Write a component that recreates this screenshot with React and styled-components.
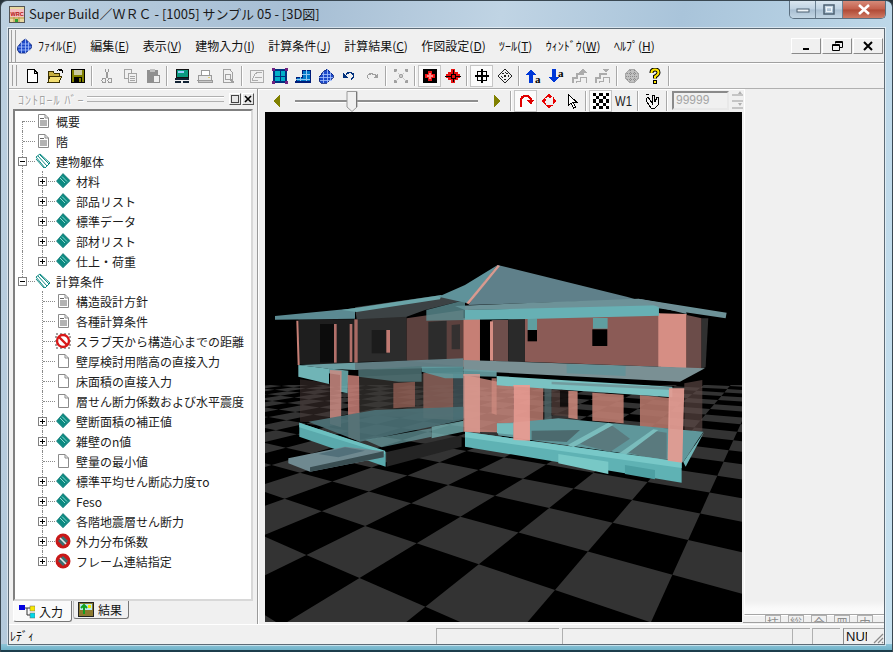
import styled, { createGlobalStyle } from 'styled-components';

const GlobalStyle = createGlobalStyle`
  html, body {
    margin: 0;
    padding: 0;
    background: #26323a;
  }
  * {
    box-sizing: border-box;
  }
`;

const uiFont = `"Noto Sans CJK JP", "Liberation Sans", sans-serif`;

const Window = styled.div`
  width: 893px;
  height: 652px;
  display: flex;
  flex-direction: column;
  overflow: hidden;
  border-radius: 7px 7px 0 0;
  border: 1px solid #3a4852;
  border-bottom: none;
  font-family: ${uiFont};
  font-size: 12px;
  color: #111;
  background:
    linear-gradient(to top, #1c3e4c 0, #1c3e4c 2px, #6fb2c8 2px, #8ec4d8 8px, transparent 8px),
    linear-gradient(100deg, #bcd0e0 0%, #a6bed4 30%, #c0d4e4 50%, #a9c4da 68%, #c8e2f0 100%);
`;

const TitleBar = styled.div`
  height: 27px;
  flex: none;
  display: flex;
  align-items: flex-start;
  padding-left: 8px;
`;

const AppIcon = styled.svg`
  width: 16px;
  height: 17px;
  margin-top: 5px;
  flex: none;
`;

const TitleText = styled.div`
  margin: 4px 0 0 4px;
  font-size: 13px;
  line-height: 18px;
  color: #1a1a1a;
  white-space: nowrap;
`;

const CaptionButtons = styled.div`
  margin-left: auto;
  margin-right: 6px;
  margin-top: -1px;
  flex: none;
  display: flex;
  height: 19px;
  border: 1px solid #5b6f80;
  border-top: none;
  border-radius: 0 0 5px 5px;
  overflow: hidden;
`;

const CaptionButton = styled.div`
  width: ${(p) => p.$w}px;
  flex: none;
  display: flex;
  align-items: center;
  justify-content: center;
  border-right: 1px solid #6d8294;
  background: ${(p) =>
    p.$close
      ? 'linear-gradient(#d8907f, #c4604c 50%, #b04a36 55%, #cf7a64)'
      : 'linear-gradient(#dce8f1, #bfd2e2 50%, #a9bfd2 55%, #c3d6e4)'};

  &:last-child {
    border-right: none;
  }
`;

const Client = styled.div`
  flex: 1;
  margin: 0 7px 7px 7px;
  display: flex;
  flex-direction: column;
  min-height: 0;
  background: #f0f0f0;
  border: 1px solid #5d6b76;
  box-shadow: 0 0 0 1px rgba(255, 255, 255, 0.5);
`;

const MenuRow = styled.div`
  height: 34px;
  flex: none;
  display: flex;
  align-items: center;
  padding-left: 2px;
  border-bottom: 1px solid #a0a0a0;
  box-shadow: 0 1px 0 #fff;
`;

const Gripper = styled.div`
  width: 5px;
  height: ${(p) => p.$h}px;
  flex: none;
  border-left: 1px solid #a0a0a0;
  border-right: 1px solid #a0a0a0;
`;

const MenuLogo = styled.svg`
  width: 17px;
  height: 16px;
  margin: 0 5px 0 0;
  flex: none;
`;

const MenuItem = styled.span`
  margin-right: 13.4px;
  white-space: nowrap;
  line-height: 16px;
`;

const MdiButtons = styled.div`
  margin-left: auto;
  margin-right: 1px;
  display: flex;
  gap: 1px;
`;

const MdiButton = styled.div`
  width: 30px;
  height: 16px;
  display: flex;
  align-items: center;
  justify-content: center;
  background: #f0f0f0;
  border: 1px solid;
  border-color: #fff #8a8a8a #8a8a8a #fff;
`;

const ToolRow = styled.div`
  height: 25px;
  flex: none;
  display: flex;
  align-items: center;
  padding-left: 3px;
`;

const ToolBlock = styled.div`
  display: flex;
  align-items: center;
  padding-left: 3px;
  height: 23px;
`;

const ToolButton = styled.div`
  width: 23px;
  height: 22px;
  flex: none;
  display: flex;
  align-items: center;
  justify-content: center;
  background: ${(p) => (p.$active ? '#fbfbfb' : 'transparent')};
  border: 1px solid ${(p) => (p.$active ? '#c6c6c6' : 'transparent')};
`;

const LayerLabel = styled.span`
  font-family: 'Liberation Sans', sans-serif;
  font-size: 14px;
  color: #222;
  transform: scaleX(0.8);
`;

const ToolSep = styled.div`
  width: 6px;
  height: 20px;
  flex: none;

  &::before {
    content: '';
    display: block;
    width: 1px;
    height: 100%;
    margin-left: 2px;
    background: #a8a8a8;
    box-shadow: 1px 0 0 #fff;
  }
`;

const Main = styled.div`
  flex: 1;
  display: flex;
  min-height: 0;
  border-top: 1px solid #b0b0b0;
  box-shadow: inset 0 1px 0 #fff;
`;

const ControlBar = styled.div`
  width: 249px;
  flex: none;
  display: flex;
  flex-direction: column;
  border-right: 1px solid #9a9a9a;
  box-shadow: 1px 0 0 #fff;
`;

const BarHeader = styled.div`
  height: 20px;
  flex: none;
  display: flex;
  align-items: center;
  padding: 0 3px 0 9px;
  color: #a3a3a3;
  text-shadow: 1px 1px 0 #fff;
`;

const BarTitle = styled.span`
  letter-spacing: 1.1px;
  white-space: nowrap;
`;

const BarLines = styled.div`
  flex: 1;
  height: 6px;
  margin: 0 4px 0 2px;
  border-top: 1px solid #b0b0b0;
  border-bottom: 1px solid #b0b0b0;
  box-shadow: inset 0 1px 0 #fff;
`;

const BarButton = styled.div`
  width: 12px;
  height: 12px;
  margin-left: 1px;
  display: flex;
  align-items: center;
  justify-content: center;
  border: 1px solid;
  border-color: #fff #555 #555 #fff;
  background: #e6e6e6;
`;

const TreeBox = styled.div`
  width: 240px;
  height: 492px;
  flex: none;
  margin-left: 4px;
  background: #fff;
  border: 2px solid;
  border-color: #808080 #d8d8d8 #d8d8d8 #808080;
`;

const TreeRow = styled.div`
  height: 20px;
  display: flex;
  align-items: center;
  white-space: nowrap;
  font-size: 12px;
  color: #1c1c1c;
`;

const Guide = styled.div`
  width: 20px;
  height: 20px;
  flex: none;
  position: relative;

  &::before {
    content: ${(p) => (p.$line === 'none' ? 'none' : "''")};
    position: absolute;
    left: 7px;
    top: ${(p) => (p.$line === 'down' ? '10px' : '0')};
    bottom: ${(p) => (p.$line === 'up' ? '10px' : '0')};
    border-left: 1px dotted #8a8a8a;
  }

  &::after {
    content: ${(p) => (p.$branch ? "''" : 'none')};
    position: absolute;
    left: 8px;
    right: 0;
    top: 10px;
    border-top: 1px dotted #8a8a8a;
  }
`;

const Expander = styled.div`
  position: absolute;
  left: 3px;
  top: 6px;
  width: 9px;
  height: 9px;
  z-index: 1;
  background: #fff;
  border: 1px solid #808080;

  &::before {
    content: '';
    position: absolute;
    left: 1px;
    right: 1px;
    top: 3px;
    height: 1px;
    background: #000;
  }

  &::after {
    content: ${(p) => (p.$open ? 'none' : "''")};
    position: absolute;
    top: 1px;
    bottom: 1px;
    left: 3px;
    width: 1px;
    background: #000;
  }
`;

const TreeIcon = styled.svg`
  width: 16px;
  height: 16px;
  flex: none;
  margin-right: 5px;
`;

const Tabs = styled.div`
  height: 21px;
  flex: none;
  display: flex;
  align-items: flex-start;
  padding-left: 4px;
`;

const Tab = styled.div`
  display: flex;
  align-items: center;
  gap: 4px;
  flex: none;
  width: ${(p) => p.$w}px;
  height: ${(p) => (p.$active ? 21 : 18)}px;
  padding-left: ${(p) => (p.$active ? 5 : 4)}px;
  margin-left: ${(p) => (p.$active ? 0 : 1)}px;
  font-size: 12px;
  background: ${(p) => (p.$active ? '#fafafa' : '#f0f0f0')};
  border-right: 1px solid #777;
  border-bottom: 1px solid #777;
  border-left: 1px solid ${(p) => (p.$active ? '#fff' : '#bbb')};
  border-radius: 0 0 3px 3px;
`;

const TabIcon = styled.svg`
  width: 16px;
  height: 15px;
  flex: none;
`;

const Splitter = styled.div`
  width: 7px;
  flex: none;
`;

const ViewColumn = styled.div`
  width: 478px;
  flex: none;
  display: flex;
  flex-direction: column;
`;

const ViewToolbar = styled.div`
  height: 23px;
  flex: none;
  display: flex;
  align-items: center;
  overflow: hidden;
`;

const Slider = styled.div`
  width: 197px;
  height: 20px;
  flex: none;
  position: relative;

  &::before {
    content: '';
    position: absolute;
    left: 7px;
    right: 7px;
    top: 9px;
    height: 2px;
    background: #8e8e8e;
    box-shadow: 0 1px 0 #fff;
  }
`;

const SliderThumb = styled.svg`
  position: absolute;
  left: 58px;
  top: 0;
  width: 12px;
  height: 21px;
`;

const ValueField = styled.div`
  width: 57px;
  height: 19px;
  flex: none;
  margin-left: 2px;
  padding-left: 2px;
  font-family: 'Liberation Sans', sans-serif;
  font-size: 12px;
  line-height: 15px;
  color: #a4a4a4;
  border: 2px solid;
  border-color: #8a8a8a #e8e8e8 #e8e8e8 #8a8a8a;
`;

const Spinner = styled.svg`
  width: 12px;
  height: 22px;
  margin-left: 3px;
  flex: none;
`;

const Canvas = styled.svg`
  display: block;
  width: 477px;
  height: 510px;
  flex: none;
  background: #000;
`;

const SidePanel = styled.div`
  flex: 1;
  display: flex;
  flex-direction: column;
  min-width: 0;
`;

const SideBlank = styled.div`
  flex: 1;
  margin-left: 1px;
  border-left: 1px solid #fff;
  background: linear-gradient(#f0f0f0 97.5%, #fafafa 99%);
  border-bottom: 1px solid #a6a6a6;
  box-shadow: 0 1px 0 #fff;
`;

const SideButtons = styled.div`
  height: 8px;
  flex: none;
  display: flex;
  justify-content: flex-end;
  gap: 7px;
  padding-right: 11px;
  margin-bottom: 1px;
  overflow: hidden;
  border-bottom: 1px solid #a0a0a0;
`;

const SideButton = styled.div`
  width: 16px;
  height: 18px;
  flex: none;
  overflow: hidden;
  border: 1px solid #b0b0b0;
  border-bottom: none;
  font-size: 12px;
  line-height: 14px;
  text-align: center;
  color: #8d8d8d;
  background: #f0f0f0;
`;

const StatusBar = styled.div`
  height: 20px;
  flex: none;
  display: flex;
  align-items: flex-end;
  position: relative;
  border-top: 1px solid #fff;
`;

const StatusText = styled.div`
  width: 427px;
  height: 17px;
  padding-left: 1px;
  line-height: 17px;
  flex: none;
`;

const StatusPanel = styled.div`
  width: ${(p) => p.$w}px;
  margin-left: ${(p) => p.$gap || 0}px;
  height: 16px;
  flex: none;
  overflow: hidden;
  border-left: 1px solid ${(p) => (p.$dark ? '#8a8a8a' : '#b0b0b0')};
  border-top: 1px solid #a8a8a8;
  font-family: 'Liberation Sans', sans-serif;
  font-size: 13px;
  line-height: 15px;
  padding-left: ${(p) => (p.$dark ? 2 : 0)}px;
  color: #111;
`;

const NumLabel = styled.div`
  width: 21px;
  overflow: hidden;
  white-space: nowrap;
`;

const SizeGrip = styled.svg`
  position: absolute;
  right: 0;
  bottom: 0;
  width: 12px;
  height: 12px;
`;

const Svg16 = ({ children }) => (
  <svg width="16" height="16" viewBox="0 0 16 16" shapeRendering="crispEdges">
    {children}
  </svg>
);

const BuildingShape = () => (
  <>
    <path d="M1 9 L6 3 L9 1 L15 7 L15 10 L9 15 L3 15 L1 12Z" fill="#1c48c8" stroke="#0a2278" strokeWidth="0.8" />
    <path d="M5 4 L5 15 M9 1 L9 15 M12 4 L12 13 M1 9 L15 9 M2 12 L14 12 M4 6 L13 6" stroke="#a9c4ff" strokeWidth="0.8" fill="none" />
  </>
);

const icons = {
  newDoc: <path d="M3.5 1.5H10L13.5 5V14.5H3.5Z M10 1.5V5H13.5" fill="#fff" stroke="#000" />,
  open: (
    <>
      <path d="M1 3H6L7 5H12V14H1Z" fill="#c8b040" stroke="#3a3000" />
      <path d="M3 8H15L12 14H1Z" fill="#f2dd70" stroke="#3a3000" />
      <path d="M10 3 Q12 0 15 2 M15 2V5M15 2H12" fill="none" stroke="#000" strokeWidth="1" />
    </>
  ),
  save: (
    <>
      <rect x="1.5" y="1.5" width="13" height="13" fill="#808000" stroke="#000" />
      <rect x="4" y="2" width="8" height="5" fill="#c8c8a0" />
      <rect x="4" y="9" width="8" height="6" fill="#000" />
      <rect x="9" y="10" width="2" height="4" fill="#808000" />
    </>
  ),
  cut: (
    <g stroke="#9a9a9a" fill="none">
      <path d="M6 1L9 10M10 1L7 10" />
      <circle cx="5" cy="12.5" r="2" />
      <circle cx="11" cy="12.5" r="2" />
    </g>
  ),
  copy: (
    <g stroke="#a4a4a4" fill="#f0f0f0">
      <rect x="2.5" y="1.5" width="7" height="9" />
      <rect x="6.5" y="5.5" width="8" height="9" />
      <path d="M8 8H13M8 10H13M8 12H13" fill="none" />
    </g>
  ),
  paste: (
    <>
      <rect x="2" y="2" width="11" height="13" rx="1" fill="#909090" />
      <rect x="5" y="1" width="5" height="3" fill="#c0c0c0" />
      <rect x="8.5" y="7.5" width="6" height="7" fill="#f0f0f0" stroke="#909090" />
    </>
  ),
  panel: (
    <>
      <rect x="2" y="1" width="12" height="8" fill="#0a9a80" stroke="#111" />
      <rect x="4" y="3" width="6" height="2" fill="#9cf" />
      <path d="M1 11H15M1 14H7M9 14H15" stroke="#123" strokeWidth="1.4" />
    </>
  ),
  printer: (
    <g stroke="#9a9a9a" fill="#e8e8e8">
      <path d="M4 2H12V7H4Z" fill="#fff" />
      <path d="M2 7H14L15 12H1Z" />
      <path d="M1 12H15V14H1Z" fill="#c8c8c8" />
      <rect x="11" y="9" width="2" height="1" fill="#e0d070" stroke="none" />
    </g>
  ),
  preview: (
    <g stroke="#a0a0a0" fill="none">
      <path d="M3 1.5H10L12 4V14H3Z" />
      <circle cx="8" cy="9" r="3" />
      <path d="M10 11L14 15" strokeWidth="1.5" />
    </g>
  ),
  graph: (
    <g stroke="#acacac" fill="none">
      <rect x="1.5" y="2.5" width="13" height="12" />
      <path d="M3 12L6 6Q9 3 13 5M6 9H13M3 12H9" />
    </g>
  ),
  frame: (
    <>
      <rect x="2" y="2" width="12" height="12" fill="#00b0c8" stroke="#003080" strokeWidth="1.4" />
      <path d="M8 2V14M2 8H14" stroke="#003080" />
      <path d="M0 0h3v3H0z M13 0h3v3h-3z M0 13h3v3H0z M13 13h3v3h-3z" fill="#702080" />
    </>
  ),
  stairs: (
    <>
      <path d="M1 9H7V2H15V14H1Z" fill="#0078c8" stroke="#001c78" />
      <path d="M1 11H15M7 6H15M11 2V14M5 9V14" stroke="#90c8f0" />
      <path d="M0 14H16" stroke="#001c78" strokeWidth="2" />
    </>
  ),
  building: <BuildingShape />,
  undo: (
    <>
      <path d="M5 6Q9 3 12 6Q14 9 10 11" fill="none" stroke="#00307c" strokeWidth="1.5" />
      <path d="M2 4V10H7Z" fill="#00307c" />
    </>
  ),
  redo: (
    <>
      <path d="M13 8Q8 4 4 7Q2 9 5 11" fill="none" stroke="#a0a0a0" strokeWidth="1.2" />
      <path d="M14 5V10H10Z" fill="#a0a0a0" />
    </>
  ),
  nodes: (
    <g fill="#a0a0a0">
      <path d="M1 1h3v3H1z M12 1h3v3h-3z M1 12h3v3H1z M12 12h3v3h-3z M6 6h4v4H6z" />
      <path d="M3 3L13 13M13 3L3 13" stroke="#c8c8c8" strokeDasharray="2 1" />
    </g>
  ),
  redBox: (
    <>
      <rect x="1" y="1" width="14" height="14" fill="#000" />
      <path d="M6 3H10V6H13V10H10V13H6V10H3V6H6Z" fill="#f01818" />
      <path d="M7 5H9V11H7Z M5 7H11V9H5Z" fill="#fff" opacity=".5" />
    </>
  ),
  redDiamond: (
    <>
      <path d="M6 1H10V4H13V6H15V10H13V12H10V15H6V12H3V10H1V6H3V4H6Z" fill="#e81010" />
      <path d="M0 8H16M8 2V14" stroke="#000" />
      <rect x="6" y="6" width="4" height="4" fill="#e81010" stroke="#000" />
    </>
  ),
  cross: (
    <>
      <rect x="3.5" y="3.5" width="9" height="9" fill="none" stroke="#000" strokeWidth="1.5" />
      <path d="M1 8H15M8 1V15" stroke="#000" strokeWidth="1.5" />
    </>
  ),
  diamond: (
    <g fill="none" stroke="#222">
      <path d="M8 1L15 8L8 15L1 8Z" />
      <path d="M8 4L12 8L8 12L4 8Z" strokeDasharray="1 1" />
      <path d="M4 4L12 12 M12 4L4 12" strokeDasharray="1 1" />
    </g>
  ),
  arrowUpA: (
    <>
      <path d="M5 1L10 7H7V15H3V7H0Z" fill="#0038d8" />
      <text x="9" y="15" fontFamily="Liberation Serif, serif" fontWeight="700" fontSize="11" fill="#000">a</text>
    </>
  ),
  arrowDownA: (
    <>
      <path d="M3 1H7V9H10L5 15L0 9H3Z" fill="#0038d8" />
      <text x="9" y="9" fontFamily="Liberation Serif, serif" fontWeight="700" fontSize="11" fill="#000">a</text>
    </>
  ),
  stairUp: (
    <g fill="none" stroke="#ababab">
      <path d="M1 15V10H5V6H12" strokeWidth="1.2" />
      <path d="M4 15V13H8V9H14V15" />
      <path d="M11 1L14 4H8Z" fill="#ababab" />
    </g>
  ),
  stairDown: (
    <g fill="none" stroke="#ababab">
      <path d="M1 15V10H5V6H12" strokeWidth="1.2" />
      <path d="M4 15V13H8V9H14V15" />
      <path d="M8 1H14L11 4Z" fill="#ababab" />
    </g>
  ),
  ball: (
    <>
      <circle cx="8" cy="8" r="6.5" fill="#c0c0c0" stroke="#a8a8a8" />
      <path d="M3 5H13M2 8H14M3 11H13M6 2V14M10 2V14" stroke="#8c8c8c" strokeDasharray="1 1" />
    </>
  ),
  help: (
    <g shapeRendering="auto" fill="none">
      <path d="M4.5 5Q4.5 1.5 8 1.5Q11.5 1.5 11.5 4.5Q11.5 6.5 8 8.5V10.5" stroke="#000" strokeWidth="4" />
      <path d="M4.5 5Q4.5 1.5 8 1.5Q11.5 1.5 11.5 4.5Q11.5 6.5 8 8.5V10.5" stroke="#ffe600" strokeWidth="2" />
      <rect x="6.5" y="12.5" width="3" height="3" fill="#ffe600" stroke="#000" />
    </g>
  ),
  triLeft: <path d="M11 2V14L4 8Z" fill="#808000" />,
  triRight: <path d="M5 2V14L12 8Z" fill="#808000" />,
  rotate: (
    <>
      <path d="M3 14V8Q3 3 8 3Q12 3 13 7" fill="none" stroke="#e00000" strokeWidth="2.4" />
      <path d="M9 7H16L13 12Z" fill="#e00000" />
    </>
  ),
  move: (
    <g fill="#e80000">
      <path d="M8 0L11 4H5Z M8 16L5 12H11Z M0 8L4 5V11Z M16 8L12 11V5Z" />
      <rect x="4" y="4" width="8" height="8" fill="none" stroke="#e80000" strokeDasharray="2 2" />
    </g>
  ),
  pointer: <path d="M4 1V13L7 10L9.5 15L11.5 14L9 9.5H13Z" fill="#fff" stroke="#000" />,
  checker: (
    <>
      <rect width="16" height="16" fill="#fff" />
      <path d="M0 0h3v3H0z M6 0h4v3H6z M13 0h3v3h-3z M3 3h3v3H3z M10 3h3v3h-3z M0 6h3v4H0z M6 6h4v4H6z M13 6h3v4h-3z M3 10h3v3H3z M10 10h3v3h-3z M0 13h3v3H0z M6 13h4v3H6z M13 13h3v3h-3z" fill="#000" />
    </>
  ),
  hand: (
    <g fill="#f4f4f4" stroke="#000">
      <path d="M3 4L7 10V2L9 2L10 9L12 4L14 5L13 12L10 15H6L2 9L1 6Z" />
      <path d="M1 2L4 1" fill="none" />
    </g>
  ),
};

const toolbarOne = [
  'newDoc', 'open', 'save', '|',
  'cut', 'copy', 'paste', '|',
  'panel', 'printer', 'preview', '|',
  'graph', 'frame', 'stairs', 'building', 'undo', 'redo', '|',
  'nodes', '|',
  'redBox*', 'redDiamond', '|',
  'cross*', 'diamond', '|',
  'arrowUpA', 'arrowDownA', 'stairUp', 'stairDown', '|',
  'ball', 'help', '|',
];

const ToolIcons = ({ list }) =>
  list.map((name, i) => {
    if (name === '|') return <ToolSep key={i} />;
    const active = name.endsWith('*');
    const key = name.replace('*', '');
    return (
      <ToolButton key={i} $active={active}>
        <Svg16>{icons[key]}</Svg16>
      </ToolButton>
    );
  });

const TreeGlyph = ({ type }) => {
  const doc = (
    <path d="M3.5 1.5H10L13.5 5V14.5H3.5Z M10 1.5V5H13.5" fill="#fff" stroke="#8a8a8a" />
  );
  const book = (
    <>
      <path d="M8 0.5L15 7.5L8 14.5L1.5 8Z" fill="#0d8b82" stroke="#066" strokeWidth="0.6" />
      <path d="M1.5 8.5L8 15L15 8" fill="none" stroke="#5aa" strokeWidth="1" />
      <path d="M5 5L10 10M7 3.5L12 8.5" stroke="#9fe0d8" strokeWidth="0.9" />
    </>
  );
  if (type === 'doc') return <TreeIcon viewBox="0 0 16 16">{doc}</TreeIcon>;
  if (type === 'lines') {
    return (
      <TreeIcon viewBox="0 0 16 16">
        {doc}
        <path d="M5 5.5H9M5 8H12M5 10H12M5 12H12" stroke="#666" />
      </TreeIcon>
    );
  }
  if (type === 'group') {
    return (
      <TreeIcon viewBox="0 0 16 16">
        <path d="M1 4L5 1L15 10L10 15Z" fill="#fff" stroke="#0f8a84" strokeWidth="1" />
        <path d="M3 3L12 13M5 2L14 11M1 6L9 15" stroke="#0f8a84" strokeWidth="1" />
      </TreeIcon>
    );
  }
  if (type === 'book') return <TreeIcon viewBox="0 0 16 16">{book}</TreeIcon>;
  if (type === 'noDoc') {
    return (
      <TreeIcon viewBox="0 0 16 16">
        <rect x="1" y="1" width="14" height="14" fill="#fff" stroke="#444" strokeDasharray="2 2" />
        <circle cx="8" cy="8" r="6" fill="#fff" stroke="#d81818" strokeWidth="2.4" />
        <path d="M4 4L12 12" stroke="#d81818" strokeWidth="2.4" />
      </TreeIcon>
    );
  }
  return (
    <TreeIcon viewBox="0 0 16 16">
      <circle cx="8" cy="8" r="7.5" fill="#c81818" />
      <path d="M8 3L13 8L8 13L3 8Z" fill="#3e6e70" />
      <path d="M5 5L11 11" stroke="#e8e8e8" strokeWidth="1.6" />
    </TreeIcon>
  );
};

const treeRows = [
  { label: '概要', icon: 'lines', outer: 'down' },
  { label: '階', icon: 'lines', outer: 'full' },
  { label: '建物躯体', icon: 'group', outer: 'full', open: true },
  { label: '材料', icon: 'book', outer: 'full', inner: 'full', closed: true },
  { label: '部品リスト', icon: 'book', outer: 'full', inner: 'full', closed: true },
  { label: '標準データ', icon: 'book', outer: 'full', inner: 'full', closed: true },
  { label: '部材リスト', icon: 'book', outer: 'full', inner: 'full', closed: true },
  { label: '仕上・荷重', icon: 'book', outer: 'full', inner: 'up', closed: true },
  { label: '計算条件', icon: 'group', outer: 'up', open: true },
  { label: '構造設計方針', icon: 'lines', outer: 'none', inner: 'full' },
  { label: '各種計算条件', icon: 'lines', outer: 'none', inner: 'full' },
  { label: 'スラブ天から構造心までの距離', icon: 'noDoc', outer: 'none', inner: 'full' },
  { label: '壁厚検討用階高の直接入力', icon: 'doc', outer: 'none', inner: 'full' },
  { label: '床面積の直接入力', icon: 'doc', outer: 'none', inner: 'full' },
  { label: '層せん断力係数および水平震度', icon: 'doc', outer: 'none', inner: 'full' },
  { label: '壁断面積の補正値', icon: 'book', outer: 'none', inner: 'full', closed: true },
  { label: '雑壁のn値', icon: 'book', outer: 'none', inner: 'full', closed: true },
  { label: '壁量の最小値', icon: 'doc', outer: 'none', inner: 'full' },
  { label: '標準平均せん断応力度τo', icon: 'book', outer: 'none', inner: 'full', closed: true },
  { label: 'Feso', icon: 'book', outer: 'none', inner: 'full', closed: true },
  { label: '各階地震層せん断力', icon: 'book', outer: 'none', inner: 'full', closed: true },
  { label: '外力分布係数', icon: 'noBook', outer: 'none', inner: 'full', closed: true },
  { label: 'フレーム連結指定', icon: 'noBook', outer: 'none', inner: 'up', closed: true },
];

const Tree = () => (
  <TreeBox>
    {treeRows.map((row) => {
      const nested = row.inner !== undefined;
      return (
        <TreeRow key={row.label}>
          <Guide $line={row.outer} $branch={!nested}>
            {!nested && row.open && <Expander $open />}
          </Guide>
          {nested && (
            <Guide $line={row.inner} $branch>
              {row.closed && <Expander />}
            </Guide>
          )}
          <TreeGlyph type={row.icon} />
          {row.label}
        </TreeRow>
      );
    })}
  </TreeBox>
);

// floor grid: four corners of a 2x2 tile patch, read off the picture
const quad = [
  [416.7, 543.3],
  [555, 590],
  [612.7, 522.7],
  [495, 495.7],
];

const makeFloorProjector = () => {
  const [[x0, y0], [x1, y1], [x2, y2], [x3, y3]] = quad;
  const dx1 = x1 - x2;
  const dx2 = x3 - x2;
  const sx = x0 - x1 + x2 - x3;
  const dy1 = y1 - y2;
  const dy2 = y3 - y2;
  const sy = y0 - y1 + y2 - y3;
  const den = dx1 * dy2 - dx2 * dy1;
  const g = (sx * dy2 - dx2 * sy) / den;
  const h = (dx1 * sy - sx * dy1) / den;
  const a = x1 - x0 + g * x1;
  const b = x3 - x0 + h * x3;
  const d = y1 - y0 + g * y1;
  const e = y3 - y0 + h * y3;
  return (i, j) => {
    const u = i / 2;
    const v = j / 2;
    const w = g * u + h * v + 1;
    return { x: (a * u + b * v + x0) / w, y: (d * u + e * v + y0) / w, w };
  };
};

const project = makeFloorProjector();

const floorTiles = () => {
  const tiles = [];
  for (let i = -24; i < 30; i += 1) {
    for (let j = -8; j < 40; j += 1) {
      if ((i + j) % 2 !== 0) continue;
      const pts = [project(i, j), project(i + 1, j), project(i + 1, j + 1), project(i, j + 1)];
      if (pts.some((p) => p.w < 0.05)) continue;
      tiles.push(pts.map((p) => `${p.x.toFixed(1)},${p.y.toFixed(1)}`).join(' '));
    }
  }
  return tiles;
};

// house faces, back to front, in 3x picture coordinates: [points, fill, opacity]
const houseFaces = [
  // lower storey back
  ['105,388 195,400 195,520 105,515', '#4a3a38', 0.5],
  ['280,380 600,365 600,500 285,500', '#3e3a38', 0.65],
  ['385,400 450,395 450,470 385,475', '#a86a5e', 0.65],
  ['475,368 565,372 565,510 475,505', '#8a6058', 0.85],
  ['565,372 600,372 600,505 565,510', '#3c5056', 0.8],
  ['600,375 745,405 745,548 600,545', '#c4857a', 0.85],
  ['795,410 835,412 835,515 795,518', '#b87a6e', 0.85],
  ['838,412 860,414 860,530 838,530', '#4e6466', 0.85],
  ['860,420 910,422 910,500 860,495', '#54403c', 0.75],
  ['885,422 910,424 910,470 885,470', '#000', 0.7],
  ['910,422 938,424 938,508 910,503', '#c8867a', 0.9],
  ['982,428 1076,434 1076,520 982,512', '#bc7c70', 0.9],
  ['1125,436 1215,444 1215,537 1125,530', '#b47669', 0.9],
  ['1258,400 1312,390 1312,542 1258,547', '#5f4a46', 0.65],
  // upper storey walls
  ['100,208 272,208 272,342 100,342', '#2a2a2a', 0.72],
  ['165,222 207,222 207,338 165,338', '#000', 0.6],
  ['275,205 425,190 425,332 275,336', '#2c2c2c', 1],
  ['320,240 365,240 365,310 320,310', '#1c1c1c', 1],
  ['425,205 595,180 595,350 425,332', '#5c413e', 1],
  ['490,215 545,212 545,330 490,330', '#2c2c2c', 1],
  ['560,225 585,223 585,298 560,298', '#343030', 1],
  ['645,212 680,215 680,332 645,325', '#000', 1],
  ['680,210 730,210 730,335 680,332', '#6f4f4c', 1],
  ['730,208 780,205 780,338 730,335', '#2a2a2a', 1],
  ['780,205 1185,190 1185,350 780,335', '#8b5b56', 1],
  ['788,240 816,240 816,274 788,274', '#000', 1],
  ['982,238 1027,238 1027,288 982,288', '#000', 1],
  ['788,205 816,205 816,240 788,240', '#5f9ea0', 1],
  ['984,204 1028,204 1028,236 984,236', '#5f9ea0', 1],
  ['1180,190 1265,192 1265,356 1180,350', '#d68e84', 1],
  ['1265,195 1310,205 1310,356 1265,356', '#6b4c49', 1],
  ['1310,205 1330,205 1322,352 1310,356', '#303030', 1],
  ['595,205 645,205 645,355 595,350', '#c67f75', 1],
  ['675,214 684,214 684,332 675,332', '#d68e84', 1],
  ['94,212 100,212 104,345 98,345', '#c67f75', 1],
  ['207,222 215,222 215,338 207,338', '#b2706a', 1],
  ['254,222 262,222 262,336 254,336', '#b2706a', 1],
  ['268,208 278,208 278,338 268,338', '#a86a64', 1],
  ['364,240 375,240 375,308 364,308', '#c07a72', 1],
  // middle slab
  ['100,345 270,338 270,360 190,356 100,345', '#6b9ea2', 1],
  ['100,345 192,356 192,402 100,380', '#70b4b6', 1],
  ['190,355 250,362 248,430 225,425 225,375 190,370', '#70b4b6', 0.85],
  ['270,338 595,325 595,352 270,360', '#66848a', 0.95],
  ['280,360 470,348 470,395 400,395 280,380', '#53797c', 0.8],
  ['470,350 595,350 595,385 540,385 470,365', '#5f9ea2', 0.85],
  ['595,330 1320,355 1245,395 595,362', '#7a9094', 1],
  ['905,342 1082,348 1082,378 905,370', '#5f9298', 0.8],
  ['595,358 695,362 695,380 595,378', '#68a0a4', 0.9],
  ['695,378 1222,410 1222,442 695,406', '#7ac2c2', 1],
  ['860,395 1222,412 1222,420 860,403', '#6f9296', 0.8],
  // lower columns
  ['195,360 230,362 228,532 195,522', '#cc8c84', 0.85],
  ['248,375 282,378 285,574 250,562', '#c88078', 0.85],
  ['595,372 645,372 645,548 595,545', '#dc9a90', 0.85],
  ['680,385 695,385 695,495 680,490', '#d08c80', 0.7],
  // base slab, left wing
  ['130,515 285,575 595,510 595,470 330,480', '#4c7278', 0.9],
  ['300,570 500,535 500,560 350,592', '#6a9ea2', 0.7],
  ['500,530 595,512 595,545 500,565', '#74b0b2', 0.8],
  ['103,518 362,605 362,650 103,560', '#5aa9ac', 1],
  ['103,518 360,602 360,612 103,532', '#6cc0c0', 1],
  ['70,625 240,590 356,604 356,622 135,665 70,640', '#6f8990', 1],
  ['135,652 356,604 356,622 135,665', '#3a4e52', 1],
  ['160,612 240,592 300,602 220,622', '#52707a', 1],
  ['365,606 590,556 590,590 365,650', '#242424', 1],
  // base slab, right wing
  ['695,522 880,505 1315,545 1255,636 700,556', '#5f979b', 1],
  ['696,520 745,520 745,554 696,550', '#74bcbc', 1],
  ['800,542 945,540 905,576 800,570', '#4c6a6e', 1],
  ['945,582 1035,522 1095,566 1035,606', '#5a7a7e', 1],
  ['1085,606 1165,542 1205,548 1205,626 1170,630', '#5a7a7e', 1],
  ['908,585 1030,518 1046,524 925,592', '#7abcbc', 1],
  ['1060,612 1165,538 1180,540 1080,616', '#7abcbc', 1],
  ['600,545 1250,636 1250,698 600,590', '#5fb2b4', 1],
  ['600,545 1250,636 1250,654 600,562', '#78c8c8', 1],
  ['880,612 1030,635 1030,672 880,640', '#78c8c6', 1],
  ['1080,645 1170,660 1170,688 1080,672', '#4d9fa2', 1],
  ['1255,636 1318,545 1262,650', '#6eb4b6', 1],
  // front columns sit over the slab
  ['745,405 795,405 795,572 745,570', '#e99c92', 0.95],
  ['1212,415 1258,415 1252,638 1208,632', '#e39c92', 0.95],
  // roof
  ['30,198 270,175 270,206 30,209', '#5b8a92', 1],
  ['270,172 530,135 600,150 480,180 425,200 275,208', '#3c4244', 1],
  ['230,180 530,135 525,148 275,186', '#6aa4a8', 1],
  ['698,45 608,160 520,140 600,105', '#5f929a', 1],
  ['698,45 1085,140 1120,150 610,165', '#5f808a', 1],
  ['698,45 705,48 612,162 604,160', '#d89a90', 1],
  ['570,168 1120,146 1385,188 1382,205 1180,175 600,180', '#6d9298', 1],
  ['484,180 600,150 600,210 484,212', '#5d8f94', 0.8],
  ['600,180 1182,166 1182,197 790,207 600,209', '#67b0b4', 1],
  ['1120,146 1260,172 1265,192 1182,172', '#708f96', 1],
];

const Scene = () => (
  <Canvas viewBox="265 112 477 510">
    <defs>
      <clipPath id="floor-clip">
        <rect x="265" y="385" width="477" height="237" />
      </clipPath>
    </defs>
    <g clipPath="url(#floor-clip)" fill="#333">
      {floorTiles().map((points) => (
        <polygon key={points} points={points} />
      ))}
    </g>
    <g transform="translate(265 250) scale(0.3333)">
      {houseFaces.map(([points, fill, opacity]) => (
        <polygon key={points} points={points} fill={fill} fillOpacity={opacity} />
      ))}
    </g>
  </Canvas>
);

const App = () => (
  <>
    <GlobalStyle />
    <Window>
      <TitleBar>
        <AppIcon viewBox="0 0 16 17">
          <rect x="0.5" y="0.5" width="15" height="16" fill="#e8d8a0" stroke="#555" />
          <rect x="1" y="3" width="14" height="8" fill="#f4c0c0" />
          <text x="1.5" y="9.5" fontSize="5.5" fontWeight="700" fontFamily="Liberation Sans, sans-serif" fill="#b01010">WRC</text>
          <path d="M1 12H15M5 11V16M10 11V16" stroke="#b89040" />
          <rect x="6" y="13" width="3" height="3" fill="#30a030" />
        </AppIcon>
        <TitleText>Super Build／ＷＲＣ - [1005] サンプル 05 - [3D図]</TitleText>
        <CaptionButtons>
          <CaptionButton $w={26}>
            <svg width="14" height="8"><rect x="1" y="4" width="12" height="3" fill="#eef4f8" stroke="#4c6072" /></svg>
          </CaptionButton>
          <CaptionButton $w={27}>
            <svg width="12" height="11"><rect x="1" y="1" width="10" height="9" fill="none" stroke="#4c6072" strokeWidth="1.5" /><rect x="3.5" y="3.5" width="5" height="4" fill="none" stroke="#eef4f8" /></svg>
          </CaptionButton>
          <CaptionButton $w={42} $close>
            <svg width="14" height="11"><path d="M2 1L12 10M12 1L2 10" stroke="#fff" strokeWidth="2.6" /></svg>
          </CaptionButton>
        </CaptionButtons>
      </TitleBar>

      <Client>
        <MenuRow>
          <Gripper $h={32} />
          <MenuLogo viewBox="0 0 16 16"><BuildingShape /></MenuLogo>
          <MenuItem>ﾌｧｲﾙ(<u>F</u>)</MenuItem>
          <MenuItem>編集(<u>E</u>)</MenuItem>
          <MenuItem>表示(<u>V</u>)</MenuItem>
          <MenuItem>建物入力(<u>I</u>)</MenuItem>
          <MenuItem>計算条件(<u>J</u>)</MenuItem>
          <MenuItem>計算結果(<u>C</u>)</MenuItem>
          <MenuItem>作図設定(<u>D</u>)</MenuItem>
          <MenuItem>ﾂｰﾙ(<u>T</u>)</MenuItem>
          <MenuItem>ｳｨﾝﾄﾞｳ(<u>W</u>)</MenuItem>
          <MenuItem>ﾍﾙﾌﾟ(<u>H</u>)</MenuItem>
          <MdiButtons>
            <MdiButton>
              <svg width="10" height="10"><rect x="2" y="7" width="6" height="2" fill="#000" /></svg>
            </MdiButton>
            <MdiButton>
              <svg width="11" height="10"><path d="M3.5 2.5V0.5H10.5V6.5H8M0.5 3.5H7.5V9.5H0.5Z M0.5 4.5H7.5 M3.5 1.5H10.5" fill="none" stroke="#000" /></svg>
            </MdiButton>
            <MdiButton>
              <svg width="10" height="10"><path d="M1 1L9 9M9 1L1 9" stroke="#000" strokeWidth="2" /></svg>
            </MdiButton>
          </MdiButtons>
        </MenuRow>

        <ToolRow>
          <Gripper $h={21} />
          <ToolBlock>
            <ToolIcons list={toolbarOne} />
          </ToolBlock>
        </ToolRow>

        <Main>
          <ControlBar>
            <BarHeader>
              <BarTitle>ｺﾝﾄﾛｰﾙ ﾊﾞｰ</BarTitle>
              <BarLines />
              <BarButton>
                <svg width="8" height="8"><rect x="0.5" y="0.5" width="7" height="7" fill="none" stroke="#444" /></svg>
              </BarButton>
              <BarButton>
                <svg width="8" height="8"><path d="M1 1L7 7M7 1L1 7" stroke="#000" strokeWidth="1.6" /></svg>
              </BarButton>
            </BarHeader>
            <Tree />
            <Tabs>
              <Tab $active $w={59}>
                <TabIcon viewBox="0 0 16 15">
                  <rect x="0" y="1" width="6" height="5" fill="#0000e0" />
                  <rect x="11" y="2" width="5" height="5" fill="#f8e800" stroke="#666" strokeWidth=".5" />
                  <rect x="11" y="9" width="5" height="5" fill="#00d8e8" stroke="#666" strokeWidth=".5" />
                  <path d="M6 4H11M8 4V11H11" stroke="#333" fill="none" />
                </TabIcon>
                入力
              </Tab>
              <Tab $w={56}>
                <TabIcon viewBox="0 0 16 15">
                  <rect x="0.5" y="0.5" width="15" height="14" fill="#8c7a30" stroke="#222" />
                  <rect x="2" y="2" width="12" height="6" fill="#b8e8f0" />
                  <path d="M6 12V3M3 6L6 3L9 6" stroke="#10a020" strokeWidth="2" fill="none" />
                  <rect x="10" y="3" width="3" height="3" fill="#f8e800" />
                </TabIcon>
                結果
              </Tab>
            </Tabs>
          </ControlBar>

          <Splitter />

          <ViewColumn>
            <ViewToolbar>
              <ToolButton><Svg16>{icons.triLeft}</Svg16></ToolButton>
              <Slider>
                <SliderThumb viewBox="0 0 12 21">
                  <path d="M1 0.5H11V16L6 20.5L1 16Z" fill="#f0f0f0" stroke="#9a9a9a" />
                  <path d="M10.5 1V16" stroke="#777" />
                </SliderThumb>
              </Slider>
              <ToolButton><Svg16>{icons.triRight}</Svg16></ToolButton>
              <ToolSep />
              <ToolButton $active><Svg16>{icons.rotate}</Svg16></ToolButton>
              <ToolButton><Svg16>{icons.move}</Svg16></ToolButton>
              <ToolButton><Svg16>{icons.pointer}</Svg16></ToolButton>
              <ToolSep />
              <ToolButton $active><Svg16>{icons.checker}</Svg16></ToolButton>
              <ToolButton><LayerLabel>W1</LayerLabel></ToolButton>
              <ToolSep />
              <ToolButton><Svg16>{icons.hand}</Svg16></ToolButton>
              <ToolSep />
              <ValueField>99999</ValueField>
              <Spinner viewBox="0 0 12 22">
                <path d="M0 5H12M0 11H12M0 18H12" stroke="#9a9a9a" strokeWidth="1.2" />
                <path d="M8 1L10 4H6Z M8 16L10 13H6Z" fill="#b0b0b0" />
              </Spinner>
            </ViewToolbar>
            <Scene />
          </ViewColumn>

          <SidePanel>
            <SideBlank />
            <SideButtons>
              {['技', '総', '今', '冊', '由'].map((mark) => (
                <SideButton key={mark}>{mark}</SideButton>
              ))}
            </SideButtons>
          </SidePanel>
        </Main>

        <StatusBar>
          <StatusText>ﾚﾃﾞｨ</StatusText>
          <StatusPanel $w={123} />
          <StatusPanel $w={230} $gap={3} />
          <StatusPanel $w={18} />
          <StatusPanel $w={28} $gap={2} />
          <StatusPanel $w={41} $gap={3} $dark>
            <NumLabel>NUM</NumLabel>
          </StatusPanel>
          <SizeGrip viewBox="0 0 12 12">
            <path d="M11 2L2 11M11 6L6 11M11 10L10 11" stroke="#8a8a8a" strokeWidth="1.2" />
          </SizeGrip>
        </StatusBar>
      </Client>
    </Window>
  </>
);

export default App;
